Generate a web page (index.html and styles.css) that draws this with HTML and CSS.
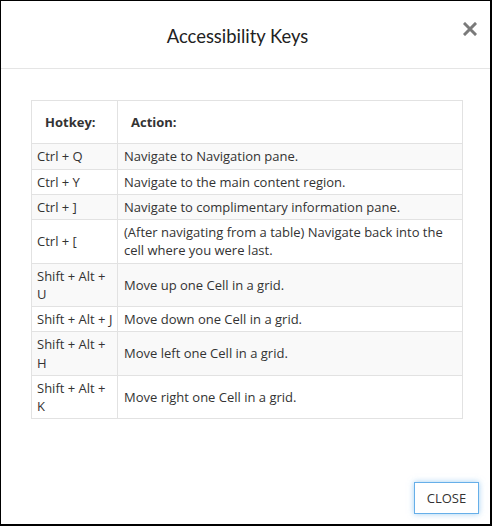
FILE: index.html
```html
<!DOCTYPE html>
<html>
<head>
<meta charset="utf-8">
<link rel="stylesheet" href="styles.css">
</head>
<body>
<div class="modal">
  <div class="modal-header">
    <h2 class="modal-title">Accessibility Keys</h2>
    <button class="close-x" aria-label="Close">
      <svg width="14" height="14" viewBox="0 0 14 14"><path d="M2 2 L12 12 M12 2 L2 12" stroke="#7a7a7a" stroke-width="3" stroke-linecap="square"/></svg>
    </button>
  </div>
  <div class="modal-body">
    <table class="keys">
      <colgroup><col class="c1"><col class="c2"></colgroup>
      <thead>
        <tr><th>Hotkey:</th><th>Action:</th></tr>
      </thead>
      <tbody>
        <tr class="odd"><td>Ctrl + Q</td><td>Navigate to Navigation pane.</td></tr>
        <tr><td>Ctrl + Y</td><td>Navigate to the main content region.</td></tr>
        <tr class="odd"><td>Ctrl + ]</td><td>Navigate to complimentary information pane.</td></tr>
        <tr><td>Ctrl + [</td><td>(After navigating from a table) Navigate back into the cell where you were last.</td></tr>
        <tr class="odd"><td>Shift + Alt + U</td><td>Move up one Cell in a grid.</td></tr>
        <tr><td>Shift + Alt + J</td><td>Move down one Cell in a grid.</td></tr>
        <tr class="odd"><td>Shift + Alt + H</td><td>Move left one Cell in a grid.</td></tr>
        <tr><td>Shift + Alt + K</td><td>Move right one Cell in a grid.</td></tr>
      </tbody>
    </table>
  </div>
  <div class="modal-footer">
    <button class="btn-close">CLOSE</button>
  </div>
</div>
</body>
</html>
```
FILE: styles.css
```css
html, body {
  margin: 0;
  padding: 0;
  background: #fff;
}
body {
  font-family: "Open Sans", "Liberation Sans", sans-serif;
  color: #333;
}
.modal {
  box-sizing: border-box;
  width: 492px;
  height: 526px;
  border: 1px solid #000;
  border-right-width: 2px;
  border-bottom-width: 2px;
  display: flex;
  flex-direction: column;
  background: #fff;
}
.modal-header {
  position: relative;
  height: 67px;
  border-bottom: 1px solid #e5e5e5;
  display: flex;
  align-items: center;
  justify-content: center;
  padding-right: 16px;
}
.modal-title {
  margin: 0;
  font-family: Lato, "Open Sans", sans-serif;
  font-weight: 400;
  font-size: 18.4px;
  color: #222;
  padding-top: 3px;
}
.close-x {
  position: absolute;
  right: 12px;
  top: 20px;
  border: 0;
  background: none;
  padding: 0;
  width: 16px;
  height: 16px;
  display: flex;
  align-items: center;
  justify-content: center;
}
.modal-body {
  flex: 1;
  padding: 31px 27px 0 30px;
}
.keys {
  width: 432px;
  table-layout: fixed;
  border-collapse: collapse;
  font-size: 13px;
  line-height: 18.25px;
  border: 1px solid #e2e2e2;
}
.keys col.c1 {
  width: 86px;
}
.keys th, .keys td {
  border: 1px solid #e2e2e2;
  text-align: left;
  vertical-align: middle;
}
.keys th {
  font-weight: 700;
  padding: 12px 6px 12px 13px;
}
.keys td {
  padding: 3px 4px 3px 6px;
}
.keys td:first-child {
  padding: 3px 1px 3px 5px;
}
.keys tr.odd td {
  background: #f9f9f9;
}
.modal-footer {
  display: flex;
  justify-content: flex-end;
  padding: 0 11px 10px 0;
}
.btn-close {
  box-sizing: border-box;
  width: 65px;
  height: 32px;
  background: #fff;
  border: 1px solid #66afe9;
  box-shadow: 0 0 6px rgba(102, 175, 233, 0.6);
  font-family: "Open Sans", "Liberation Sans", sans-serif;
  font-size: 13px;
  color: #333;
  padding: 0;
}
```
